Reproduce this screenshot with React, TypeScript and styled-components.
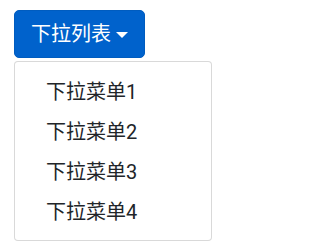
import React from "react";
import styled, { createGlobalStyle } from "styled-components";

const Global = createGlobalStyle`
  html, body { margin: 0; padding: 0; background: #fff; }
  body {
    font-family: Roboto, "Noto Sans CJK SC", sans-serif;
    color: #212529;
  }
  * { box-sizing: border-box; }
`;

const Page = styled.div`
  padding: 10px 14px;
`;

const Dropdown = styled.div`
  display: inline-flex;
  flex-direction: column;
  align-items: flex-start;
  gap: 3px;
`;

const ToggleButton = styled.button`
  display: inline-flex;
  align-items: center;
  height: 48px;
  padding: 0 16px;
  font-family: inherit;
  font-size: 20px;
  line-height: 30px;
  color: #fff;
  background: #0062cc;
  border: 1px solid #005cbf;
  border-radius: 5px;
  cursor: pointer;
`;

const Caret = styled.span`
  display: inline-block;
  margin-left: 5px;
  margin-top: 1px;
  width: 0;
  height: 0;
  border-top: 6px solid #fff;
  border-left: 6px solid transparent;
  border-right: 6px solid transparent;
`;

const Menu = styled.ul`
  list-style: none;
  margin: 0;
  width: 198px;
  padding: 10px 0 8px;
  background: #fff;
  border: 1px solid rgba(0, 0, 0, 0.15);
  border-radius: 4px;
`;

const Item = styled.li`
  display: block;
  height: 40px;
  padding: 5px 0 5px 31px;
  font-size: 20px;
  line-height: 30px;
  color: #212529;
  white-space: nowrap;
`;

const items = ["下拉菜单1", "下拉菜单2", "下拉菜单3", "下拉菜单4"];

export default function App() {
  return (
    <>
      <Global />
      <Page>
        <Dropdown>
          <ToggleButton>
            下拉列表
            <Caret />
          </ToggleButton>
          <Menu>
            {items.map((t) => (
              <Item key={t}>{t}</Item>
            ))}
          </Menu>
        </Dropdown>
      </Page>
    </>
  );
}
